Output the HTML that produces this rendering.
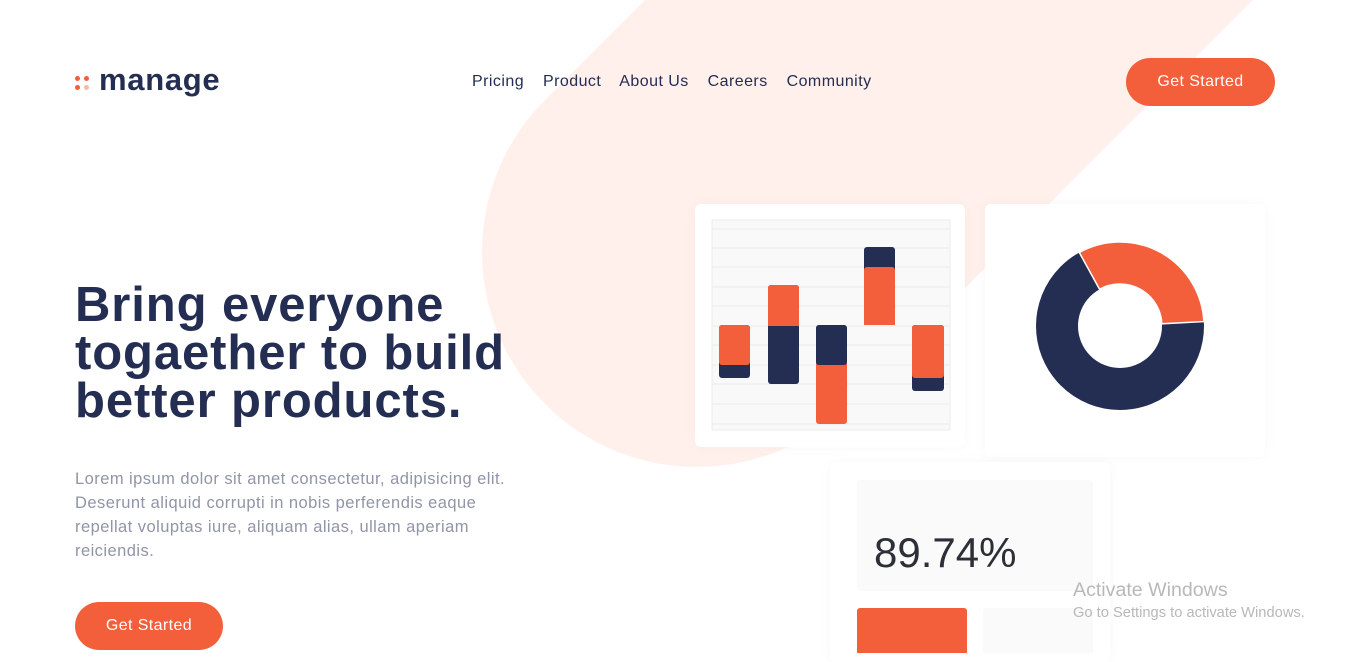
<!DOCTYPE html>
<html><head><meta charset="utf-8">
<style>
*{margin:0;padding:0;box-sizing:border-box}
body{width:1348px;height:653px;overflow:hidden;background:#fff;font-family:"Liberation Sans",sans-serif;position:relative}
.abs{position:absolute}
.logo{left:75px;top:62px;font-size:31px;font-weight:bold;color:#242d52;letter-spacing:0.7px}
.dot{position:absolute;width:5px;height:5px;border-radius:50%;background:#f25f3a}
nav{position:absolute;top:73px;left:472px;font-size:16px;color:#242d52;letter-spacing:0.45px;white-space:nowrap}
nav span{margin-right:14px}
.btn{position:absolute;background:#f25f3a;color:#fff;font-size:16px;border-radius:24px;text-align:center;line-height:48px;height:48px;letter-spacing:0.4px}
h1{position:absolute;left:75px;top:281px;font-size:49px;line-height:48px;color:#242d52;font-weight:bold;letter-spacing:0.9px;white-space:nowrap}
p{position:absolute;left:75px;top:467px;width:455px;font-size:16.5px;line-height:24px;color:#9095a7;letter-spacing:0.45px}
.card{position:absolute;background:#fff;border-radius:6px;box-shadow:0 0 14px rgba(0,0,0,0.03)}
</style></head><body>
<svg class="abs" style="left:0;top:0" width="1348" height="653">
<circle cx="697" cy="252" r="215" fill="#fff0ec"/>
<polygon points="545,100 849,404 1300,-47 996,-351" fill="#fff0ec"/>
</svg>
<div class="abs logo"><span style="position:relative;display:inline-block;width:24px;height:20px;vertical-align:middle">
<i class="dot" style="left:0;top:4px"></i><i class="dot" style="left:9px;top:4px"></i><i class="dot" style="left:0;top:13px"></i><i class="dot" style="left:9px;top:13px;background:#f9b9a6"></i></span>manage</div>
<nav><span>Pricing</span> <span>Product</span> <span>About Us</span> <span>Careers</span> <span>Community</span></nav>
<div class="btn" style="left:1126px;top:58px;width:149px">Get Started</div>
<h1>Bring everyone<br>togaether to build<br>better products.</h1>
<p>Lorem ipsum dolor sit amet consectetur, adipisicing elit. Deserunt aliquid corrupti in nobis perferendis eaque repellat voluptas iure, aliquam alias, ullam aperiam reiciendis.</p>
<div class="btn" style="left:75px;top:602px;width:148px">Get Started</div>

<div class="card" style="left:695px;top:204px;width:270px;height:243px"></div>
<div class="card" style="left:985px;top:204px;width:280px;height:253px"></div>
<div class="card" style="left:830px;top:462px;width:280px;height:200px"></div>
<svg class="abs" style="left:0;top:0" width="1348" height="653">
<rect x="712" y="220" width="238" height="210" fill="#f9f9f9" stroke="#ececec"/>
<g stroke="#ebebeb" stroke-width="1">
<line x1="712" y1="229" x2="950" y2="229"/><line x1="712" y1="248" x2="950" y2="248"/><line x1="712" y1="267" x2="950" y2="267"/><line x1="712" y1="287" x2="950" y2="287"/><line x1="712" y1="306" x2="950" y2="306"/><line x1="712" y1="326" x2="950" y2="326"/><line x1="712" y1="345" x2="950" y2="345"/><line x1="712" y1="365" x2="950" y2="365"/><line x1="712" y1="384" x2="950" y2="384"/><line x1="712" y1="404" x2="950" y2="404"/><line x1="712" y1="424" x2="950" y2="424"/>
</g>
<rect x="719" y="325" width="31" height="53" rx="3" fill="#242d52"/><rect x="719" y="325" width="31" height="40" rx="3" fill="#f25f3a"/>
<rect x="768" y="285" width="31" height="99" rx="3" fill="#242d52"/><rect x="768" y="285" width="31" height="40" rx="3" fill="#f25f3a"/><rect x="768" y="320" width="31" height="6" fill="#f25f3a"/>
<rect x="816" y="325" width="31" height="99" rx="3" fill="#f25f3a"/><rect x="816" y="325" width="31" height="40" rx="3" fill="#242d52"/>
<rect x="864" y="247" width="31" height="78" rx="3" fill="#242d52"/><rect x="864" y="267" width="31" height="58" rx="3" fill="#f25f3a"/><rect x="864" y="318" width="31" height="7" fill="#f25f3a"/>
<rect x="912" y="325" width="32" height="66" rx="3" fill="#242d52"/><rect x="912" y="325" width="32" height="53" rx="3" fill="#f25f3a"/>
<circle cx="1120" cy="326" r="63" fill="none" stroke="#242d52" stroke-width="42"/>
<path d="M1079.3,252.5 A84,84 0 0 1 1203.9,321.6 L1161.9,323.8 A42,42 0 0 0 1099.6,289.3 Z" fill="#f25f3a" stroke="#fff" stroke-width="1.5"/>
<rect x="857" y="480" width="236" height="111" rx="4" fill="#fafafa"/>
<rect x="857" y="608" width="110" height="50" rx="3" fill="#f25f3a"/>
<rect x="983" y="608" width="110" height="50" rx="3" fill="#fafafa"/>
<text x="874" y="567" font-family="Liberation Sans" font-size="42" fill="#2d2f38">89.74%</text>
<text x="1073" y="596" font-family="Liberation Sans" font-size="19.6" fill="#b8b8b8">Activate Windows</text>
<text x="1073" y="617" font-family="Liberation Sans" font-size="14.7" fill="#b8b8b8">Go to Settings to activate Windows.</text>
</svg>
</body></html>
